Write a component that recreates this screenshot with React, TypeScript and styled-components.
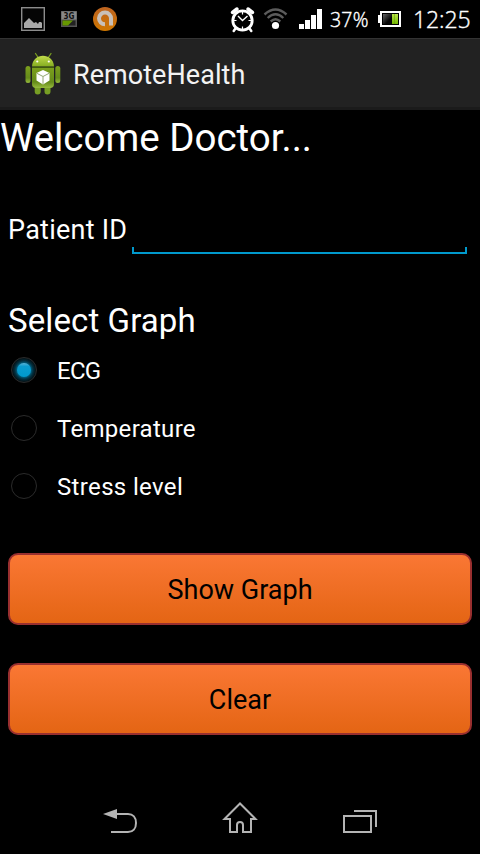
import React, { useState } from "react";
import styled, { createGlobalStyle } from "styled-components";

const GlobalStyle = createGlobalStyle`
  * { box-sizing: border-box; }
  body { margin: 0; background: #000; }
`;

const Screen = styled.div`
  width: 480px;
  height: 854px;
  display: flex;
  flex-direction: column;
  overflow: hidden;
  background: #000;
  color: #fff;
  font-family: Roboto, "Liberation Sans", sans-serif;
`;

const StatusBar = styled.header`
  height: 38px;
  flex: none;
  display: flex;
  justify-content: space-between;
  font-family: "Open Sans", "Noto Sans", sans-serif;
  font-weight: 300;
  svg { display: block; flex: none; }
`;

const StatusGroup = styled.div`
  display: flex;
`;

const StatusText = styled.span<{ $size: number; $width: number; $spacing?: number }>`
  width: ${(p) => p.$width}px;
  font-size: ${(p) => p.$size}px;
  letter-spacing: ${(p) => p.$spacing ?? 0}px;
  line-height: 39px;
  height: 38px;
  white-space: nowrap;
  -webkit-text-stroke: 0.4px #fff;
`;

const ActionBar = styled.div`
  height: 72px;
  flex: none;
  display: flex;
  align-items: center;
  padding-left: 24px;
  gap: 12px;
  background: #222;
  border-top: 1px solid #333;
  border-bottom: 3px solid #1b1b1b;
`;

const Label = styled.span<{ $size: number; $line: number; $spacing?: number }>`
  display: block;
  font-size: ${(p) => p.$size}px;
  line-height: ${(p) => p.$line}px;
  letter-spacing: ${(p) => p.$spacing ?? 0}px;
  white-space: nowrap;
`;

const BarTitle = styled(Label)`
  color: #f3f3f3;
  margin-top: 4px;
`;

const Content = styled.main`
  flex: 1;
  display: flex;
  flex-direction: column;
`;

const PatientRow = styled.label`
  display: flex;
  height: 41px;
  margin: 47px 13px 0 8px;
  justify-content: space-between;
  align-items: flex-start;
`;

const PatientInput = styled.input`
  align-self: flex-end;
  width: 335px;
  height: 41px;
  padding: 0 8px 6px;
  border: 0;
  outline: 0;
  color: #fff;
  font: 27px Roboto, sans-serif;
  background:
    linear-gradient(#0099cc, #0099cc) left bottom / 2px 7px no-repeat,
    linear-gradient(#0099cc, #0099cc) right bottom / 2px 7px no-repeat,
    linear-gradient(#0099cc, #0099cc) left bottom / 100% 2px no-repeat;
`;

const GraphHeading = styled.div`
  margin: 47px 0 0 8px;
`;

const RadioRow = styled.div`
  height: 58px;
  display: flex;
  align-items: center;
  padding-left: 11px;
  gap: 20px;
`;

const RadioText = styled(Label)`
  padding-top: 2px;
`;

const RadioRing = styled.span<{ $on: boolean }>`
  width: 26px;
  height: 26px;
  border-radius: 50%;
  border: 1px solid #2b2b2b;
  display: flex;
  align-items: center;
  justify-content: center;
  background: ${(p) => (p.$on ? "radial-gradient(circle closest-side, #005f80 58%, #03303f 76%, #04141a 96%)" : "#000")};
`;

const RadioDot = styled.span`
  width: 14px;
  height: 14px;
  border-radius: 50%;
  background: linear-gradient(#5cb4d6 0, #0a9dd0 24%, #0099cc 100%);
`;

const Buttons = styled.div`
  display: flex;
  flex-direction: column;
  gap: 38px;
  padding: 38px 8px 0;
`;

const OrangeButton = styled.button`
  height: 72px;
  padding: 2px 0 0;
  display: flex;
  align-items: center;
  justify-content: center;
  border: 2px solid #992f2f;
  border-radius: 10px;
  background: linear-gradient(#fa7734, #e46514);
  color: #000;
  font-family: inherit;
`;

const NavBar = styled.nav`
  height: 72px;
  flex: none;
  display: flex;
  align-items: center;
  justify-content: center;
  gap: 84px;
  svg { display: block; }
`;

const NotificationIcons = () => (
  <svg width="130" height="38" viewBox="0 0 130 38">
    <rect x="21.700" y="7.700" width="22.600" height="22.600" fill="#050505" stroke="#8c8c8c" strokeWidth="1.400" />
    <path d="M24 28v-5l5-5 4 4 1 1 2-1 2 2 1-2h2l1 1v5z" fill="#aaa" />
    <rect x="61" y="11" width="16" height="16" fill="#555" />
    <rect x="61.500" y="11.500" width="15" height="8" fill="#888" />
    <text x="69" y="18.600" textAnchor="middle" fontFamily="DejaVu Sans" fontWeight="700" fontSize="8.300" textLength="11" lengthAdjust="spacingAndGlyphs" fill="#111">3G</text>
    <rect x="62.500" y="20.500" width="13" height="5" fill="#222" />
    <path d="M62.500 20.500H73l-5 5h-5.500z" fill="#669800" />
    <defs>
      <linearGradient id="orb" x1="0" y1="0" x2="0" y2="1">
        <stop offset="0" stopColor="#bd6320" /><stop offset="1" stopColor="#cf7700" />
      </linearGradient>
    </defs>
    <circle cx="105" cy="19" r="12" fill="url(#orb)" />
    <path d="M105 24.300A6 5.900 0 1 1 111 18.500V25.500" fill="none" stroke="#c9c0b8" strokeWidth="4" />
  </svg>
);

const SignalIcons = () => (
  <svg width="100" height="38" viewBox="230 0 100 38">
    <g fill="none" stroke="#fff">
      <circle cx="242.500" cy="20.500" r="9.700" strokeWidth="2.800" />
      <path d="M238 16l4.500 4.500 5-4.500" strokeWidth="1.400" />
      <path d="M242.500 12v2.500M242.500 26.500V29M234 20.500h2.500M248.500 20.500h2.500" strokeWidth="1.200" />
      <path d="M232.500 12.500l4.500-3.500M252.500 12.500L248 9" strokeWidth="3.500" strokeLinecap="round" />
      <path d="M235.500 28.500l-1.800 2.500M249.500 28.500l1.800 2.500" strokeWidth="2.500" strokeLinecap="round" />
    </g>
    <g fill="none" stroke="#5b5b5b" strokeWidth="2.400">
      <path d="M264.500 14.500Q275.500 4.500 286.500 14.500" />
      <path d="M267.700 18Q275.500 10.500 283.300 18" />
      <path d="M270.700 21.500Q275.500 17 280.300 21.500" />
    </g>
    <circle cx="275.500" cy="25.500" r="3.600" fill="#fff" />
    <path d="M299 24h5v5h-5zM305 20h5v9h-5zM311 15h5v14h-5zM317 9h5v20h-5z" fill="#fff" />
  </svg>
);

const BatteryIcon = () => (
  <svg width="42" height="38" viewBox="371 0 42 38">
    <defs>
      <linearGradient id="cell" x1="0" y1="0" x2="1" y2="1">
        <stop offset="0" stopColor="#666" /><stop offset=".65" stopColor="#050505" />
      </linearGradient>
      <linearGradient id="charge" x1="0" y1="0" x2="0" y2="1">
        <stop offset="0" stopColor="#b9e34c" /><stop offset="1" stopColor="#75b900" />
      </linearGradient>
    </defs>
    <path d="M380 11h21v16h-21v-4h-2v-8h2z" fill="#fff" />
    <path d="M382 13h17v12h-17z" fill="#000" />
    <path d="M383 14h9v10h-9z" fill="url(#cell)" />
    <path d="M392 14h6v10h-6z" fill="url(#charge)" />
    <path d="M394.500 14v10" stroke="#649b00" strokeWidth=".5" />
  </svg>
);

const AndroidIcon = () => (
  <svg width="37" height="44" viewBox="24 51 37 44">
    <defs>
      <linearGradient id="droidHead" x1="0" y1="0" x2="0" y2="1">
        <stop offset="0" stopColor="#c3dc4c" /><stop offset="1" stopColor="#85ad20" />
      </linearGradient>
      <linearGradient id="droidBody" x1="0" y1="0" x2="0" y2="1">
        <stop offset="0" stopColor="#7ca01d" /><stop offset=".7" stopColor="#658b1a" /><stop offset="1" stopColor="#97bb3d" />
      </linearGradient>
    </defs>
    <path d="M35.500 53.500l3 4.500M51 53.500L48 58" stroke="#799d20" strokeWidth="1.300" strokeLinecap="round" />
    <path d="M34.700 83h6v8.500a3 3 0 0 1-6 0zM44.500 83h6v8.500a3 3 0 0 1-6 0z" fill="#779e24" />
    <rect x="25.500" y="66" width="5" height="17" rx="2.500" fill="url(#droidBody)" />
    <rect x="55.300" y="66" width="5" height="17" rx="2.500" fill="url(#droidBody)" />
    <path d="M32 67.800h22V84q0 4-4 4H36q-4 0-4-4z" fill="url(#droidBody)" />
    <path d="M32 66.500C32.500 52 53.500 52 54 66.500z" fill="url(#droidHead)" />
    <path d="M32 67.300h22" stroke="#42600b" strokeWidth="1" />
    <circle cx="37.300" cy="61.500" r="1.100" fill="#fff" /><circle cx="48.800" cy="61.500" r="1.100" fill="#fff" />
    <path d="M43 70l6.500 3v7.500L43 84.500l-6.500-4V73z" fill="#fff" />
    <path d="M36.700 73.200L43 76.500l6.300-3.300M43 76.500v7.500" fill="none" stroke="#94a873" strokeWidth="1" />
  </svg>
);

const BackIcon = () => (
  <svg width="36" height="36" viewBox="102 800 36 36" fill="none" stroke="#b4b4b4" strokeWidth="2">
    <path d="M116 814h12c5 0 8 3.500 8 9s-3 9-8 9h-17" />
    <path d="M103 814l14-5v10z" fill="#b4b4b4" stroke="none" />
  </svg>
);

const HomeIcon = () => (
  <svg width="36" height="36" viewBox="222 800 36 36" fill="none" stroke="#b4b4b4" strokeWidth="2">
    <path d="M224.500 819L240 803.500 255.500 819H251v13h-8v-7q0-3-3-3t-3 3v7h-7v-13z" />
  </svg>
);

const RecentIcon = () => (
  <svg width="36" height="36" viewBox="342 800 36 36" fill="none" stroke="#b4b4b4" strokeWidth="2">
    <path d="M344 816h27v16h-27zM354 811h22v16" />
  </svg>
);

const graphs = [
  { name: "ECG", spacing: -0.7 },
  { name: "Temperature", spacing: 0.3 },
  { name: "Stress level", spacing: 0.35 },
];

export default function App() {
  const [selected, setSelected] = useState("ECG");
  const [patient, setPatient] = useState("");
  return (
    <Screen>
      <GlobalStyle />
      <StatusBar>
        <NotificationIcons />
        <StatusGroup>
          <SignalIcons />
          <StatusText $size={19.5} $width={41} $spacing={0.2}>37%</StatusText>
          <BatteryIcon />
          <StatusText $size={23} $width={67} $spacing={-0.1}>12:25</StatusText>
        </StatusGroup>
      </StatusBar>
      <ActionBar>
        <AndroidIcon />
        <BarTitle $size={27} $line={36} $spacing={0.05}>RemoteHealth</BarTitle>
      </ActionBar>
      <Content>
        <Label $size={38.5} $line={56}>Welcome Doctor...</Label>
        <PatientRow>
          <Label $size={27} $line={34} $spacing={0.25}>Patient ID</Label>
          <PatientInput value={patient} onChange={(e) => setPatient(e.target.value)} />
        </PatientRow>
        <GraphHeading>
          <Label $size={33} $line={40} $spacing={0.1}>Select Graph</Label>
        </GraphHeading>
        {graphs.map((g) => (
          <RadioRow key={g.name} role="radio" aria-checked={selected === g.name} onClick={() => setSelected(g.name)}>
            <RadioRing $on={selected === g.name}>{selected === g.name && <RadioDot />}</RadioRing>
            <RadioText $size={24} $line={30} $spacing={g.spacing}>{g.name}</RadioText>
          </RadioRow>
        ))}
        <Buttons>
          <OrangeButton><Label $size={27} $line={34}>Show Graph</Label></OrangeButton>
          <OrangeButton onClick={() => setPatient("")}><Label $size={27} $line={34}>Clear</Label></OrangeButton>
        </Buttons>
      </Content>
      <NavBar>
        <BackIcon />
        <HomeIcon />
        <RecentIcon />
      </NavBar>
    </Screen>
  );
}
